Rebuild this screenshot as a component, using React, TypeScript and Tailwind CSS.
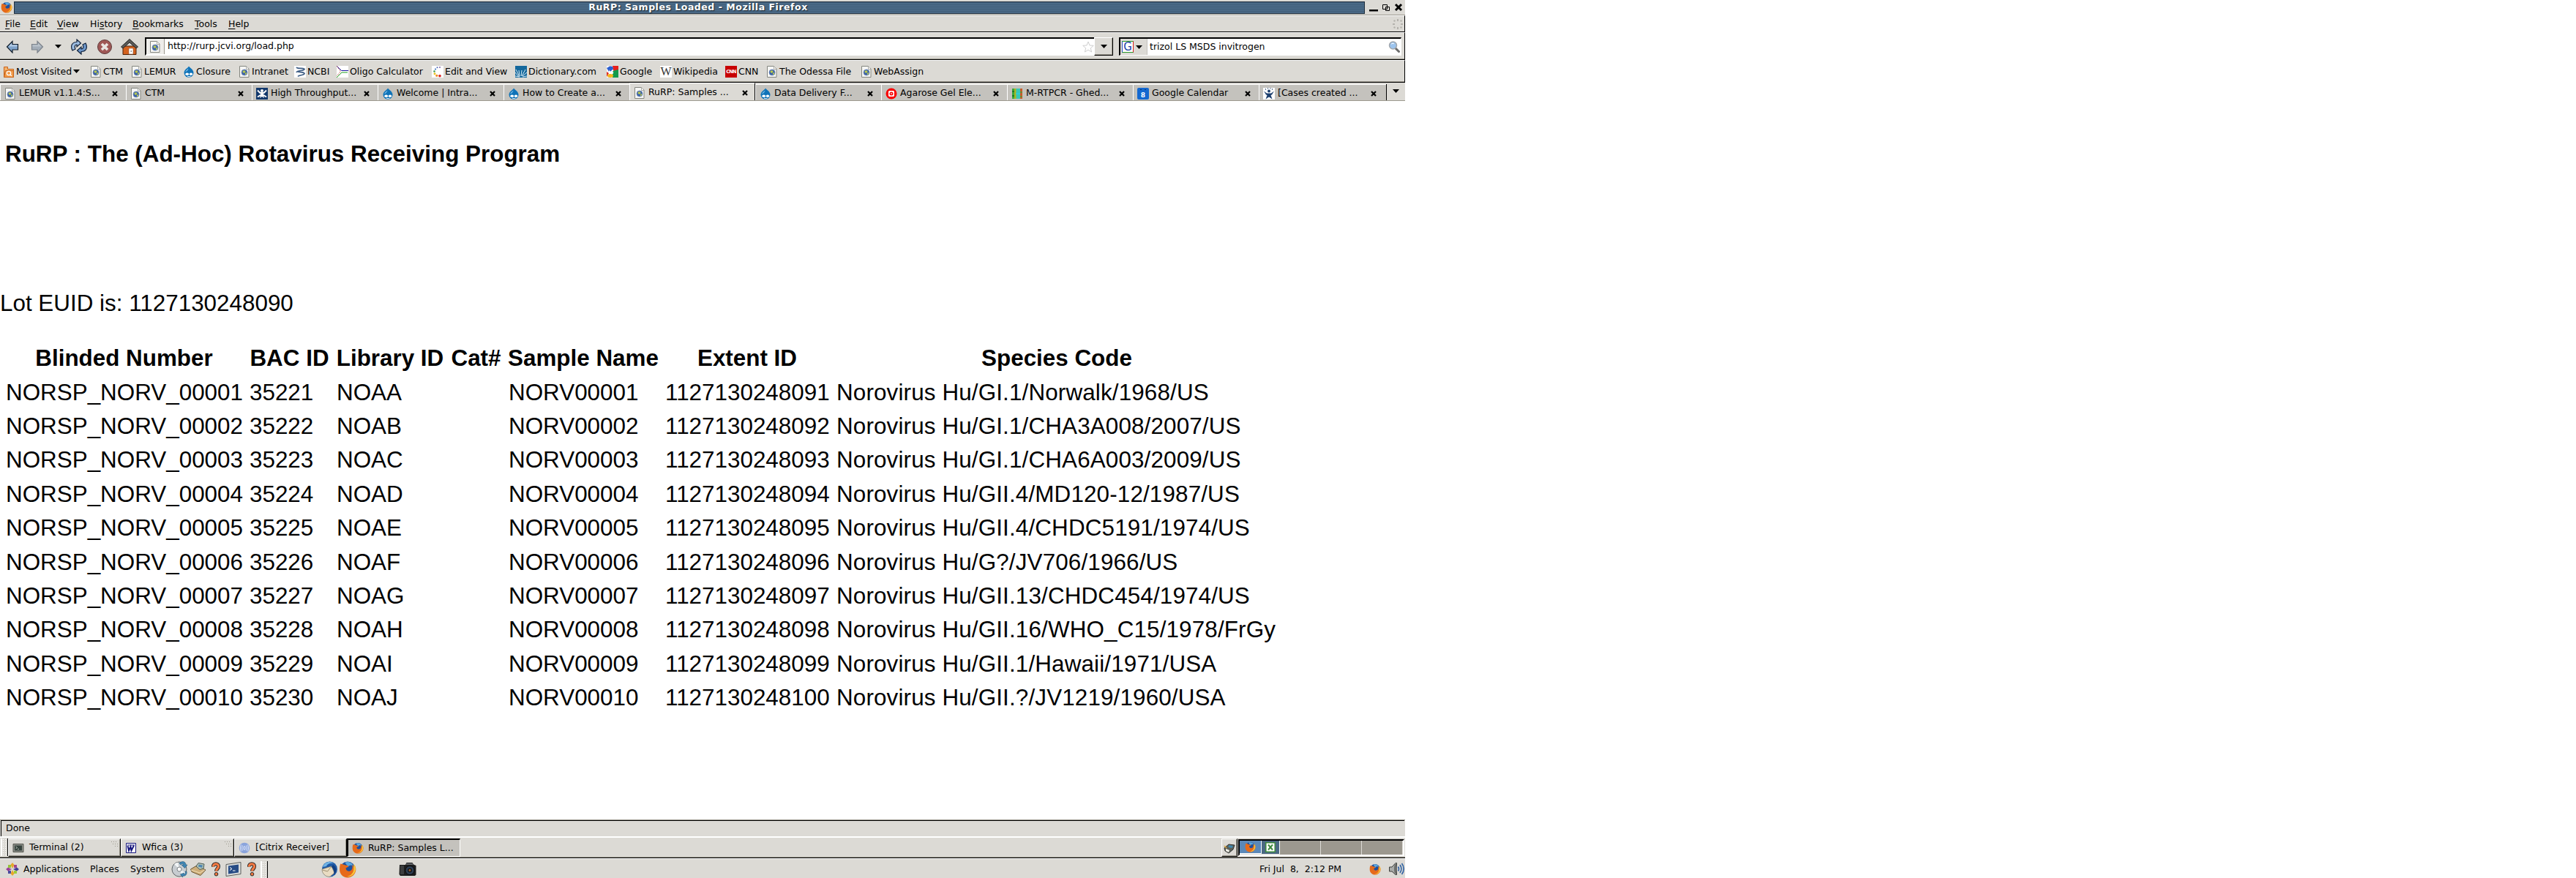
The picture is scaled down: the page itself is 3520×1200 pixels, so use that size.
import React from "react";

type IconProps = { className?: string };

const Svg = ({ s = 16, w, children, className = "" }: { s?: number; w?: number; children: React.ReactNode; className?: string }) => (
  <svg width={w ?? s} height={s} viewBox={`0 0 ${w ?? s} ${s}`} className={`block shrink-0 ${className}`}>
    {children}
  </svg>
);

const PageIcon = ({ className }: IconProps) => (
  <Svg className={className}>
    <path d="M1.500 .5h9l3.500 3.500v11.500H1.500z" fill="#f6f6f4" stroke="#84867f" />
    <path d="M10.500 .5v4h3.500" fill="#fff" stroke="#a9aaa5" />
    <circle cx="8" cy="9" r="4" fill="#3d63a8" stroke="#6d87b4" strokeWidth=".7" />
    <path d="M6 6.500l3 0 .5 2-2 1.500-2-1.500zM9 10l2-1v2l-2 1.500z" fill="#b9c94f" />
  </Svg>
);

const Firefox = ({ s = 16 }: { s?: number }) => (
  <svg width={s} height={s} viewBox="0 0 16 16" className="block shrink-0">
    <circle cx="8" cy="7.800" r="6.800" fill="#20509c" />
    <path d="M5.500 1.800c3-1.200 6.500 .2 7.500 3-2-1-4-.5-4.500 1.200z" fill="#5aa7e0" />
    <path d="M1.500 3c1 .3 1.500.2 2.500.6l2 .8 2 .3c1 0 1 1 0 1.300l-1.600 1c0 2 1.600 3.200 3.600 2.600 2-.5 3-2.600 2-5.600 1.500 1.200 2.300 2.500 2.600 3.500 0-1.500-.3-3-1-4 1.500 1.500 2.200 3.500 1.900 5.500-.6 4-3.800 6.600-7.500 6.600-4.400 0-7.500-3.500-7.300-7.600C.7 6 .9 4.500 1.500 3z" fill="#e66a1a" />
    <path d="M13.600 3.200c1.600 2 2.200 4.300 1.300 6.800-1.200 3.300-4.200 5-7.400 4.700 4-.9 6-3.700 6.100-7 0-1.500 0-3 0-4.500z" fill="#f9c93a" />
  </svg>
);

const Drupal = ({ className }: IconProps) => (
  <Svg className={className}>
    <path d="M8 .5c1 2 6.500 4.300 6.500 9A6.400 6.200 0 0 1 8 15.700 6.400 6.200 0 0 1 1.500 9.500C1.500 5 7 3 8 .5z" fill="#0f73b8" />
    <path d="M7.500 3.500C6 5 3.500 6.500 3.200 8.500c2-1 4-2.500 4.300-5z" fill="#7fc0ea" />
    <ellipse cx="5.700" cy="11.300" rx="2.400" ry="1.700" fill="#fff" />
    <ellipse cx="11" cy="11.300" rx="2.200" ry="1.700" fill="#fff" />
    <path d="M6 14c1.500.9 3 .9 4.500 0" stroke="#fff" fill="none" />
  </Svg>
);

const MostVisited = () => (
  <Svg>
    <path d="M1.500 1.500h5v3h8v11h-13z" fill="#f3b06a" stroke="#c8641a" />
    <path d="M3.500 6.500h11v9h-13z" fill="#f29a48" stroke="#c8641a" />
    <circle cx="8" cy="10" r="2.700" fill="none" stroke="#fff" strokeWidth="1.300" />
    <path d="M10 12l2 2" stroke="#fff" strokeWidth="1.300" />
  </Svg>
);

const Ncbi = () => (
  <Svg>
    <path d="M0 0h16v16H0z" fill="#fff" />
    <path d="M3 2c2 3 8 0 11 2.500-1 3-10 1-11 4.500M4 7.500c3 2 9 0 10 3-1 3-7 1.500-9 4" fill="none" stroke="#3c5c84" strokeWidth="1.700" />
  </Svg>
);

const Oligo = () => (
  <Svg>
    <path d="M0 0h16v16H0z" fill="#fff" />
    <path d="M0 0l6.500 6.500h9.500" stroke="#1a1aa0" fill="none" />
    <path d="M0 16l7-7h8" stroke="#20a020" fill="none" />
    <path d="M0 0l5.500 7.500L0 14" stroke="#b03030" strokeDasharray="1 1" fill="none" />
  </Svg>
);

const DotsIcon = () => (
  <Svg>
    <path d="M0 0h16v16H0z" fill="#fff" />
    <circle cx="11" cy="2" r=".9" fill="#6a4fa0" />
    <circle cx="7.500" cy="2.200" r="1" fill="#4a62b0" />
    <circle cx="5" cy="4.500" r="1.100" fill="#3a72c0" />
    <circle cx="3.500" cy="7.500" r="1.300" fill="#3f9a50" />
    <circle cx="4" cy="10.700" r="1.500" fill="#e8c520" />
    <circle cx="6.800" cy="13.300" r="1.600" fill="#f08a20" />
    <circle cx="11" cy="13.700" r="1.800" fill="#d81e1e" />
  </Svg>
);

const Dictionary = () => (
  <Svg>
    <path d="M0 0h16v16H0z" fill="#14689c" />
    <path d="M6 15L1 5M6 14L5 6M8 14l1-8M9 14l5-9M10 14l6-5M5 15L0 9M6 15l-6-1M10 15l6-1" stroke="#d5e8f2" strokeWidth="1" />
  </Svg>
);

const GoogleNew = () => (
  <Svg>
    <path d="M0 0h8v16H0z" fill="#fff" />
    <path d="M8 0h8v6l-7 1z" fill="#e8201c" />
    <path d="M8 7l8-2v11H8z" fill="#129a4a" />
    <path d="M0 3l5-3-2 8z" fill="#2a5fd0" />
    <ellipse cx="6" cy="4" rx="2.800" ry="3.400" fill="#2a5fd0" />
    <path d="M9 6c-3 1-2 3 0 4" stroke="#fff" strokeWidth="2" fill="none" />
    <path d="M0 8l3 2-3 5z" fill="#e03020" />
    <ellipse cx="5" cy="13.500" rx="4" ry="2.500" fill="#f4b51c" />
  </Svg>
);

const Wiki = () => (
  <span className="flex h-4 w-4 shrink-0 items-center justify-center bg-white font-['Liberation_Serif'] text-[16px] leading-4 text-[#333]">W</span>
);

const Cnn = () => (
  <span className="flex h-4 w-4 shrink-0 items-center justify-center bg-[#c80000] text-[6.5px] leading-4 font-bold tracking-[-0.7px] text-white">CNN</span>
);

const BlueFigure = () => (
  <Svg>
    <path d="M0 0h16v16H0z" fill="#12386c" />
    <circle cx="8" cy="4" r="2" fill="#fff" />
    <path d="M2 3.500l3.500 3.500h5L14 3.500M2 12.500L6 10h4l4 2.500" stroke="#fff" strokeWidth="2" fill="none" />
    <path d="M5.500 6h5l-1 3 1.500 5-3-2-3 2 1.500-5z" fill="#fff" />
  </Svg>
);

const Target = () => (
  <Svg>
    <circle cx="8" cy="8" r="7.500" fill="#f80000" />
    <path d="M5 4h6l1 1v6l-1 1H5l-1-1V5z" fill="#fff" />
    <circle cx="8" cy="8" r="2.500" fill="#f80000" />
    <path d="M7.300 7.300h1.400v1.400H7.300z" fill="#fff" />
  </Svg>
);

const Heat = () => (
  <Svg>
    <path d="M1 1h14v14H1z" fill="#37c8b4" />
    <path d="M1 1h3v14H1z" fill="#3aa83a" />
    <path d="M4 1h2.500v14H4z" fill="#a8b820" />
    <path d="M12 1h3v14h-3z" fill="#c85a28" />
    <path d="M1 4h3v2H1zM1 10h3v2H1z" fill="#1f7a28" />
    <path d="M12 5h3v2h-3zM12 11h3v2h-3z" fill="#6f8a30" />
    <path d="M6 8h6" stroke="#28d0f0" />
  </Svg>
);

const GCal = () => (
  <span className="relative flex h-4 w-4 shrink-0 items-end justify-center rounded-[2px] bg-[#1468d0] text-[9px] leading-[12px] font-bold text-white">
    8
    <span className="absolute top-0.5 left-1 h-px w-0.5 bg-[#08356e]" />
    <span className="absolute top-0.5 right-1 h-px w-0.5 bg-[#08356e]" />
  </span>
);

const JiraMan = () => (
  <Svg>
    <path d="M0 0h16v16H0z" fill="#fff" />
    <circle cx="8" cy="4.500" r="1.900" fill="#1c3f6e" />
    <path d="M1 4.500l4 3h6l4-3-3 5L10.500 10l2 5.500-4.500-3-4.500 3L5.500 10l-1.500-.5z" fill="#1c3f6e" />
    <path d="M3 2h1M6 .8h1M9.500 .8h1M12 2h1" stroke="#1c3f6e" strokeWidth="1.300" />
  </Svg>
);

const Triangle = ({ className = "" }: IconProps) => (
  <svg width="9" height="5" viewBox="0 0 9 5" className={`block shrink-0 ${className}`}>
    <path d="M0 0h9L4.500 5z" fill="#000" />
  </svg>
);

const Cross = ({ className = "" }: IconProps) => (
  <svg width="8" height="8" viewBox="0 0 8 8" className={`block shrink-0 ${className}`}>
    <path d="M1 1l6 6M7 1L1 7" stroke="#000" strokeWidth="2.200" />
  </svg>
);

const Arrow = ({ forward = false }: { forward?: boolean }) => (
  <Svg s={18} className={forward ? "-scale-x-100" : ""}>
    <path d="M1.500 9L9 1.500v4h7.500v7.500H9v4z" fill={forward ? "#a3adb8" : "#7fa3cb"} stroke={forward ? "#7d848c" : "#15202c"} strokeWidth="1.200" />
    <path d="M3.500 8.500L8 4v2.500h7.500v2z" fill={forward ? "#bcc4cc" : "#b4cbe4"} />
  </Svg>
);

const Reload = () => (
  <Svg s={22} w={24}>
    <path d="M3 16C0 10 2 4.500 9 4.500V1l5.500 5L9 11V8C6 8 5.500 11 7 14z" fill="#9dbde2" stroke="#12233c" strokeWidth="1.200" />
    <path d="M21 6c3 6 1 11.500-6 11.500V21l-5.500-5L15 11v3c3 0 3.500-3 2-6z" fill="#6f98cb" stroke="#12233c" strokeWidth="1.200" />
  </Svg>
);

const Stop = () => (
  <Svg s={22}>
    <circle cx="11" cy="11" r="9.500" fill="#a05856" stroke="#5d3a39" />
    <path d="M7 7l8 8M15 7l-8 8" stroke="#e9e6e3" strokeWidth="3.600" />
  </Svg>
);

const Home = () => (
  <Svg s={24} w={26}>
    <path d="M4 11h18v11.500H4z" fill="#d4621e" stroke="#4b2008" />
    <path d="M13 1.500L24.500 12l-2.500 2-9-8-9 8L1.500 12z" fill="#5a5a58" stroke="#222" />
    <path d="M12 14h6v8h-6z" fill="#fff" stroke="#8f5a3c" strokeWidth=".6" />
    <path d="M14.500 18h1.500" stroke="#222" />
  </Svg>
);

const Star = () => (
  <Svg>
    <path d="M8 1l2 5 5.300.3-4 3.500 1.300 5.200L8 12.200 3.400 15l1.300-5.200-4-3.500L6 6z" fill="#fff" stroke="#cfcfcf" />
  </Svg>
);

const Magnifier = () => (
  <Svg>
    <path d="M10 10l4.500 4.500" stroke="#6c6c6c" strokeWidth="3" strokeLinecap="round" />
    <circle cx="6.500" cy="6" r="5" fill="#9cc4ee" stroke="#a0a6ac" strokeWidth="1.500" />
    <path d="M4 4.500c1-1.500 3-1.500 4-.5" stroke="#fff" fill="none" />
  </Svg>
);

const Throbber = () => (
  <Svg>
    <g fill="#b4b2ad">
      <path d="M7 1h2v3H7zM7 12h2v3H7zM1 7h3v2H1zM12 7h3v2h-3z" />
      <circle cx="3.500" cy="3.500" r="1.200" />
      <circle cx="12.500" cy="3.500" r="1.200" />
      <circle cx="3.500" cy="12.500" r="1.200" />
      <circle cx="12.500" cy="12.500" r="1.200" />
    </g>
  </Svg>
);

const Help = () => (
  <Svg s={20} w={16}>
    <path d="M4.500 6.500C4 1.500 12 1.500 11.500 6.500c0 2.500-3 3-3 6" fill="none" stroke="#222" strokeWidth="5" />
    <circle cx="8.500" cy="16.700" r="2.300" fill="#ef7740" stroke="#222" />
    <path d="M4.500 6.500C4 1.500 12 1.500 11.500 6.500c0 2.500-3 3-3 6" fill="none" stroke="#f27a45" strokeWidth="3.200" />
  </Svg>
);

const TerminalIcon = () => (
  <Svg>
    <path d="M1 2.500h14v11H1z" fill="#8b8d88" stroke="#55574f" />
    <path d="M3 4.500h10v7H3z" fill="#35423c" />
    <path d="M4.500 6l2 1.500-2 1.500M7 9.500h2" stroke="#c8d0c8" fill="none" strokeWidth=".8" />
  </Svg>
);

const WordIcon = () => (
  <Svg>
    <path d="M1.500 1.500h13v13h-13z" fill="#fff" stroke="#14147c" />
    <path d="M3.500 5l1.500 6.500L7.500 6l1 5.500L12 4.500" fill="none" stroke="#14147c" strokeWidth="1.900" />
    <path d="M3 4h10" stroke="#14147c" />
  </Svg>
);

const Citrix = () => (
  <Svg>
    <circle cx="8" cy="8" r="7.300" fill="#8aa4dc" />
    <g fill="none" stroke="#e6ecfa" strokeWidth=".9">
      <ellipse cx="8" cy="8" rx="1.200" ry="2.500" />
      <path d="M5.500 4.500c-1.200 2-1.200 5 0 7M10.500 4.500c1.200 2 1.200 5 0 7M3.600 3.500c-1.600 3-1.600 6 0 9M12.400 3.500c1.600 3 1.600 6 0 9" />
    </g>
  </Svg>
);

const Pinwheel = () => (
  <Svg s={18}>
    <path d="M9 0l2.500 3L9 8 6.500 3z" fill="#e8a628" />
    <path d="M9 18l2.500-3L9 10l-2.500 5z" fill="#e8a628" />
    <path d="M0 9l3-2.500L8 9l-5 2.500z" fill="#9a3f96" />
    <path d="M18 9l-3-2.500L10 9l5 2.500z" fill="#3f3f96" />
    <path d="M3 3h4v4H3z" fill="#96c43a" />
    <path d="M11 3h4v4h-4z" fill="#a0468c" />
    <path d="M3 11h4v4H3z" fill="#4a4aa0" />
    <path d="M11 11h4v4h-4z" fill="#9ccb3c" />
  </Svg>
);

const Disc = () => (
  <Svg s={24}>
    <circle cx="11" cy="12" r="10" fill="#c7ccd0" stroke="#5e6468" />
    <path d="M11 12L4 5a10 10 0 0 1 5-2.500z" fill="#f2f5f6" />
    <path d="M11 12l9 5a10 10 0 0 1-5 4z" fill="#eef2f3" />
    <circle cx="11" cy="12" r="3" fill="#fff" stroke="#7b8185" />
    <path d="M11 4c3-4 9-3 9 2h2l-3.500 4.500L14 6h3c-1-2-3-2-4 0zM21 15c1 4-2 7-5 6l-.5 2-3-4 5-2-.5 2c2 0 3-2 2-4z" fill="#3f86b4" stroke="#1d4c6c" strokeWidth=".5" />
  </Svg>
);

const Package = () => (
  <Svg s={20} w={24}>
    <path d="M1.500 10L10 5l12 6-7 7.500L3 13.500z" fill="#cdae7a" stroke="#6a5430" />
    <path d="M9 6l3-4.500 8 1.500-1 6-5 1.500z" fill="#b4c4b4" stroke="#4c5c58" />
    <path d="M12.500 3.500l5.500 1-1 3.500-5-1.500z" fill="#4f86b4" />
    <path d="M2 11l12 4 7-4" stroke="#efdcb4" fill="none" />
  </Svg>
);

const Screen = () => (
  <Svg s={22} w={22}>
    <path d="M1 4.500l20-3v16L1 20.500z" fill="#dcdedc" stroke="#5a5c5a" />
    <path d="M4 6.500l14-2v11L4 17.500z" fill="#274c86" />
    <path d="M6 8.500l3 2-3 2M10 13h3.500" stroke="#fff" fill="none" />
  </Svg>
);

const Thunderbird = () => (
  <Svg s={24}>
    <circle cx="12.500" cy="12" r="10.500" fill="#1f5aa6" />
    <path d="M3 9C5 2 13 0 18 4c-5-1-9 1-10 4z" fill="#6fb2e4" />
    <path d="M2 12l13-4 4 9-6 5c-6 1-11-4-11-10z" fill="#e9dcc2" stroke="#8c7c5c" strokeWidth=".6" />
    <path d="M2.500 13l7 2 5.500-7" fill="none" stroke="#8c7c5c" strokeWidth=".8" />
    <path d="M17 6c5 3 6 9 1 14 1-5 0-9-3-11z" fill="#123e80" />
  </Svg>
);

const Camera = () => (
  <Svg s={20} w={26}>
    <path d="M2 4h8l1.500-3h8L21 3.500l3.500 1.500v12.500L23 19H3l-1.500-2z" fill="#1c1d1d" />
    <path d="M11.500 2h8l1 2h-10z" fill="#63666a" />
    <path d="M3 5h5v12H3z" fill="#3b3d3e" />
    <circle cx="16" cy="11.500" r="6" fill="#2e3f54" stroke="#0a0a0a" />
    <circle cx="16" cy="11.500" r="3" fill="#15181c" />
    <circle cx="16" cy="11.500" r="1.400" fill="#a0602c" />
  </Svg>
);

const Speaker = () => (
  <Svg s={20} w={22}>
    <path d="M1.500 7H5l5-5.500h1.500v16H10L5 13H1.500z" fill="#a9aba8" stroke="#3c3e3b" />
    <ellipse cx="10" cy="9.500" rx="2" ry="7" fill="#6c6e6b" />
    <path d="M13.500 6.500c1.300 2 1.300 4 0 6M16 4c2.500 3.500 2.500 7.500 0 11M18.500 2c3.500 4.500 3.500 10.500 0 15" fill="none" stroke="#3465a4" strokeWidth="1.700" />
  </Svg>
);

const Swap = () => (
  <Svg>
    <path d="M1 8l6-5 8 1-2 6-6 5-5-3z" fill="#5c6058" stroke="#1c1c1c" strokeWidth=".8" />
    <path d="M7 4l6 1-1.500 3-5-1z" fill="#3f88b0" />
    <path d="M3 9l5 2-1 3-4-2z" fill="#f0efe8" />
    <path d="M1 5l3 3" stroke="#d8a43c" strokeWidth="1.500" />
  </Svg>
);

const Excel = () => (
  <Svg s={14}>
    <path d="M.8 .8h12.400v12.400H.8z" fill="#fff" stroke="#3e8a3e" strokeWidth="1.500" />
    <path d="M4 3.500l6 7M10 3.500l-6 7" stroke="#3e8a3e" strokeWidth="2" />
  </Svg>
);

const bookmarks: [string, React.ReactNode, string][] = [
  ["Most Visited", <MostVisited />, "w-[119px]"],
  ["CTM", <PageIcon />, "w-[56px]"],
  ["LEMUR", <PageIcon />, "w-[71px]"],
  ["Closure", <Drupal />, "w-[76px]"],
  ["Intranet", <PageIcon />, "w-[76px]"],
  ["NCBI", <Ncbi />, "w-[58px]"],
  ["Oligo Calculator", <Oligo />, "w-[130px]"],
  ["Edit and View", <DotsIcon />, "w-[114px]"],
  ["Dictionary.com", <Dictionary />, "w-[125px]"],
  ["Google", <GoogleNew />, "w-[73px]"],
  ["Wikipedia", <Wiki />, "w-[89px]"],
  ["CNN", <Cnn />, "w-[56px]"],
  ["The Odessa File", <PageIcon />, "w-[129px]"],
  ["WebAssign", <PageIcon />, "w-[110px]"],
];

const tabs: [string, React.ReactNode][] = [
  ["LEMUR v1.1.4:S...", <PageIcon />],
  ["CTM", <PageIcon />],
  ["High Throughput...", <BlueFigure />],
  ["Welcome | Intra...", <Drupal />],
  ["How to Create a...", <Drupal />],
  ["RuRP: Samples ...", <PageIcon />],
  ["Data Delivery F...", <Drupal />],
  ["Agarose Gel Ele...", <Target />],
  ["M-RTPCR - Ghed...", <Heat />],
  ["Google Calendar", <GCal />],
  ["[Cases created ...", <JiraMan />],
];

const menus: [string, string, string, string][] = [
  ["", "F", "ile", "w-[34px]"],
  ["", "E", "dit", "w-[37px]"],
  ["", "V", "iew", "w-[45px]"],
  ["Hi", "s", "tory", "w-[58px]"],
  ["", "B", "ookmarks", "w-[85px]"],
  ["", "T", "ools", "w-[46px]"],
  ["", "H", "elp", "w-[40px]"],
];

const rows: string[][] = [
  ["NORSP_NORV_00001", "35221", "NOAA", "", "NORV00001", "1127130248091", "Norovirus Hu/GI.1/Norwalk/1968/US"],
  ["NORSP_NORV_00002", "35222", "NOAB", "", "NORV00002", "1127130248092", "Norovirus Hu/GI.1/CHA3A008/2007/US"],
  ["NORSP_NORV_00003", "35223", "NOAC", "", "NORV00003", "1127130248093", "Norovirus Hu/GI.1/CHA6A003/2009/US"],
  ["NORSP_NORV_00004", "35224", "NOAD", "", "NORV00004", "1127130248094", "Norovirus Hu/GII.4/MD120-12/1987/US"],
  ["NORSP_NORV_00005", "35225", "NOAE", "", "NORV00005", "1127130248095", "Norovirus Hu/GII.4/CHDC5191/1974/US"],
  ["NORSP_NORV_00006", "35226", "NOAF", "", "NORV00006", "1127130248096", "Norovirus Hu/G?/JV706/1966/US"],
  ["NORSP_NORV_00007", "35227", "NOAG", "", "NORV00007", "1127130248097", "Norovirus Hu/GII.13/CHDC454/1974/US"],
  ["NORSP_NORV_00008", "35228", "NOAH", "", "NORV00008", "1127130248098", "Norovirus Hu/GII.16/WHO_C15/1978/FrGy"],
  ["NORSP_NORV_00009", "35229", "NOAI", "", "NORV00009", "1127130248099", "Norovirus Hu/GII.1/Hawaii/1971/USA"],
  ["NORSP_NORV_00010", "35230", "NOAJ", "", "NORV00010", "1127130248100", "Norovirus Hu/GII.?/JV1219/1960/USA"],
];

const headers = ["Blinded Number", "BAC ID", "Library ID", "Cat#", "Sample Name", "Extent ID", "Species Code"];

const rowGrid = "grid h-[46.4px] grid-cols-[323px_109px_146px_69px_204px_224px_602px] gap-x-[10px] pl-[8px] items-center";

const Grip = () => (
  <div className="mt-px h-6 w-[10px] shrink-0 border-r border-l-2 border-r-black border-l-white bg-[#dcdad5] bg-[radial-gradient(#fff_0.8px,transparent_1px)] bg-[length:3px_3px]" />
);

const TaskButton = ({ icon, label, width, grouped }: { icon: React.ReactNode; label: string; width: string; grouped?: boolean }) => (
  <div className={`relative flex h-[25px] shrink-0 items-center border-t border-r border-b border-l border-t-white border-r-black border-b-black border-l-white bg-[#dcdad5] shadow-[inset_-1px_-1px_0_#9c998e] ${width}`}>
    <span className="ml-[5px]">{icon}</span>
    <span className="ml-[7px]">{label}</span>
    {grouped && (
      <svg width="9" height="8" className="absolute top-[3px] right-[3px]">
        <path d="M0 0h1v1H0zM3 0h1v1H3zM6 0h1v1H6zM2 3h1v1H2zM5 3h1v1H5zM8 3h1v1H8zM5 6h1v1H5zM8 6h1v1H8z" fill="#9c998e" />
      </svg>
    )}
  </div>
);

const tabClass = (i: number) => {
  if (i === 5) return "flex h-6 w-[172px] shrink-0 items-center border-t border-r border-l border-t-white border-r-black border-l-white bg-[#dcdad5] pt-[2px] pr-[9px] pl-[5px]";
  if (i === 10) return "flex h-[22px] w-[174px] shrink-0 items-center border-t border-l border-white bg-[#c4c2bd] pt-[2px] pr-[13px] pl-[5px]";
  return "flex h-[22px] w-[172px] shrink-0 items-center border-t border-l border-white bg-[#c4c2bd] pt-[2px] pr-[11px] pl-[5px]";
};

export default function App() {
  return (
    <div className="h-[1200px] w-[3520px] overflow-hidden bg-white">
      <div className="flex h-[1200px] w-[1920px] flex-col font-['DejaVu_Sans','Liberation_Sans',sans-serif] text-[12.5px] leading-none whitespace-nowrap text-black">
        {/* Window title */}
        <div className="flex h-[21px] shrink-0 items-start border-b border-[#9c998e] bg-[#dcdad5]">
          <div className="mt-[2px] ml-[1px] w-[18px]">
            <Firefox />
          </div>
          <div className="mt-[2px] flex h-[17px] w-[1846px] items-center justify-center border border-[#20303f] bg-[#466583] bg-[repeating-linear-gradient(0deg,#4a6986_0px,#4a6986_2px,#415f7b_2px,#415f7b_3px)] font-bold tracking-[0.53px] text-white [text-shadow:1px_1px_1px_#1b2834]">
            <span className="mr-[-24px]">RuRP: Samples Loaded - Mozilla Firefox</span>
          </div>
          <svg width="50" height="16" className="mt-[3px] ml-[4px] block">
            <path d="M2 10h12v2.500H2z" fill="#000" />
            <path d="M20.500 3.500h6v6h-6zM24.500 6.500h5v5h-5z" fill="#dcdad5" stroke="#000" />
            <path d="M38 3l8 8M46 3l-8 8" stroke="#000" strokeWidth="3" />
          </svg>
        </div>

        {/* Menu bar */}
        <div className="flex h-[23px] shrink-0 items-center justify-between border-t border-r border-b border-t-white border-r-black border-b-black bg-[#dcdad5] pr-[1px]">
          <div className="flex pt-[2px] pl-[7px]">
            {menus.map(([a, u, b, w]) => (
              <span key={u + b} className={w}>
                {a}
                <span className="underline underline-offset-2">{u}</span>
                {b}
              </span>
            ))}
          </div>
          <Throbber />
        </div>

        {/* Navigation toolbar */}
        <div className="flex h-[38px] shrink-0 items-center border-t border-r border-b border-t-white border-r-black border-b-black bg-[#dcdad5] pt-px shadow-[inset_0_-1px_0_#9c998e]">
          <div className="flex w-[198px] items-center">
            <div className="ml-[8px] w-[34px]"><Arrow /></div>
            <div className="w-[33px]"><Arrow forward /></div>
            <div className="w-[21px]"><Triangle /></div>
            <div className="w-[36px]"><Reload /></div>
            <div className="w-[32px]"><Stop /></div>
            <Home />
          </div>
          <div className="flex h-[25px] w-[1297px] items-center border-t-2 border-b-2 border-l-2 border-t-black border-b-white border-l-black bg-white">
            <div className="flex h-full w-[25px] items-center justify-center border-r border-[#9c998e] bg-[#eeedea]"><PageIcon /></div>
            <span className="ml-[4px] flex-1">http://rurp.jcvi.org/load.php</span>
            <Star />
          </div>
          <div className="flex h-[25px] w-[26px] items-center justify-center border border-t-white border-r-black border-b-black border-l-white shadow-[inset_-1px_-1px_0_#9c998e]">
            <Triangle />
          </div>
          <div className="ml-[8px] flex h-[25px] w-[386px] items-center border-t-2 border-r border-b border-l-2 border-t-black border-r-white border-b-white border-l-black bg-white">
            <div className="flex h-full w-[37px] items-center border-r border-[#c4c2bd] bg-[#dcdad5] pl-[2px]">
              <span className="flex h-4 w-4 items-center justify-center border border-t-[#2a9a2a] border-r-[#d82020] border-b-[#2a9a2a] border-l-[#2a50c8] bg-white text-[15px] text-[#1c3fa8]">G</span>
              <Triangle className="ml-[3px]" />
            </div>
            <span className="ml-[3px] flex-1">trizol LS MSDS invitrogen</span>
            <span className="mr-[1px]"><Magnifier /></span>
          </div>
        </div>

        {/* Bookmarks */}
        <div className="flex h-[31px] shrink-0 items-center border-t border-r border-b border-t-white border-r-black border-b-black bg-[#dcdad5] pt-px pl-[4px] shadow-[inset_0_-1px_0_#9c998e]">
          {bookmarks.map(([label, icon, w], i) => (
            <div key={label} className={`flex shrink-0 items-center gap-[2px] ${w}`}>
              {icon}
              <span>{label}</span>
              {i === 0 && <Triangle className="mb-[2px]" />}
            </div>
          ))}
        </div>

        {/* Tabs */}
        <div className="flex h-[25px] shrink-0 items-end border-b border-[#9c998e] bg-[#dcdad5]">
          {tabs.map(([label, icon], i) => (
            <div key={label} className={tabClass(i)}>
              {icon}
              <span className="ml-[4px] flex-1">{label}</span>
              <Cross />
            </div>
          ))}
          <div className="h-[22px] w-px bg-black" />
          <Triangle className="mb-[10px] ml-[8px]" />
        </div>

        {/* Page content */}
        <div className="min-h-0 flex-1 font-['Liberation_Sans',Arial,sans-serif] text-[31.4px]">
          <h1 className="mt-[55px] ml-[7px] h-[36px] leading-[36px] font-bold">RuRP : The (Ad-Hoc) Rotavirus Receiving Program</h1>
          <p className="mt-[168px] h-[36px] leading-[36px]">Lot EUID is: 1127130248090</p>
          <div className="mt-[34px] leading-[36px]">
            <div className={rowGrid + " justify-items-center font-bold"}>
              {headers.map((h) => (
                <span key={h}>{h}</span>
              ))}
            </div>
            {rows.map((r) => (
              <div key={r[0]} className={rowGrid}>
                {r.map((c, i) => (
                  <span key={i} className={i === 6 ? "tracking-[0.14px]" : ""}>{c}</span>
                ))}
              </div>
            ))}
          </div>
        </div>

        {/* Status bar */}
        <div className="flex h-[25px] shrink-0 items-center border-t border-b-2 border-t-[#9c998e] border-b-white bg-[#dcdad5] pl-px">
          <div className="flex h-full w-[1918px] items-center border-t border-l border-black pl-[6px]">Done</div>
        </div>

        {/* Window list */}
        <div className="flex h-[28px] shrink-0 items-start border-b border-black bg-[#dcdad5] pl-px shadow-[inset_0_-1px_0_#9c998e]">
          <Grip />
          <div className="flex pt-px">
            <TaskButton icon={<TerminalIcon />} label="Terminal (2)" width="w-[154px]" grouped />
            <TaskButton icon={<WordIcon />} label="Wfica (3)" width="w-[155px]" grouped />
            <TaskButton icon={<Citrix />} label="[Citrix Receiver]" width="w-[154px]" />
            <div className="flex h-[25px] w-[155px] items-center border-t-2 border-r border-b border-l-2 border-t-black border-r-white border-b-white border-l-black bg-[#c4c2bd] pl-[5px]">
              <Firefox />
              <span className="ml-[6px]">RuRP: Samples L...</span>
            </div>
          </div>
          <div className="mt-px ml-auto flex h-[25px] w-[22px] items-center justify-center border border-t-white border-r-black border-b-black border-l-white shadow-[inset_-1px_-1px_0_#9c998e]">
            <Swap />
          </div>
          <div className="mt-[2px] mr-[1px] ml-[1px] flex h-[23px] w-[227px] border-t-2 border-r-2 border-b-2 border-l-2 border-t-black border-r-white border-b-white border-l-black bg-[#dcdad5] pr-px">
            <div className="flex h-[18px] w-[30px] items-center justify-center border-r border-b border-white bg-[#5b88b8]"><Firefox s={15} /></div>
            <div className="flex h-[18px] w-[25px] items-center justify-center border-r border-white bg-[#4b6983]"><Excel /></div>
            <div className="h-[19px] flex-1 border-r border-[#dcdad5] bg-[#9c988f]" />
            <div className="h-[19px] flex-1 border-r border-[#dcdad5] bg-[#9c988f]" />
            <div className="h-[19px] flex-1 bg-[#9c988f]" />
          </div>
        </div>

        {/* Desktop panel */}
        <div className="flex h-[27px] shrink-0 items-center border-t border-white bg-[#dcdad5] pt-[2px]">
          <div className="ml-[8px] w-[24px]"><Pinwheel /></div>
          <span className="w-[91px]">Applications</span>
          <span className="w-[55px]">Places</span>
          <span className="w-[56px]">System</span>
          <div className="w-[25px]"><Disc /></div>
          <div className="w-[28px]"><Package /></div>
          <div className="w-[21px]"><Help /></div>
          <div className="w-[28px]"><Screen /></div>
          <div className="w-[20px]"><Help /></div>
          <Grip />
          <div className="ml-[72px] w-[25px]"><Thunderbird /></div>
          <Firefox s={24} />
          <div className="ml-[57px]"><Camera /></div>
          <span className="ml-auto w-[150px] whitespace-pre">Fri Jul  8,  2:12 PM</span>
          <div className="w-[26px]"><Firefox /></div>
          <div className="mr-[1px]"><Speaker /></div>
        </div>
      </div>
    </div>
  );
}
